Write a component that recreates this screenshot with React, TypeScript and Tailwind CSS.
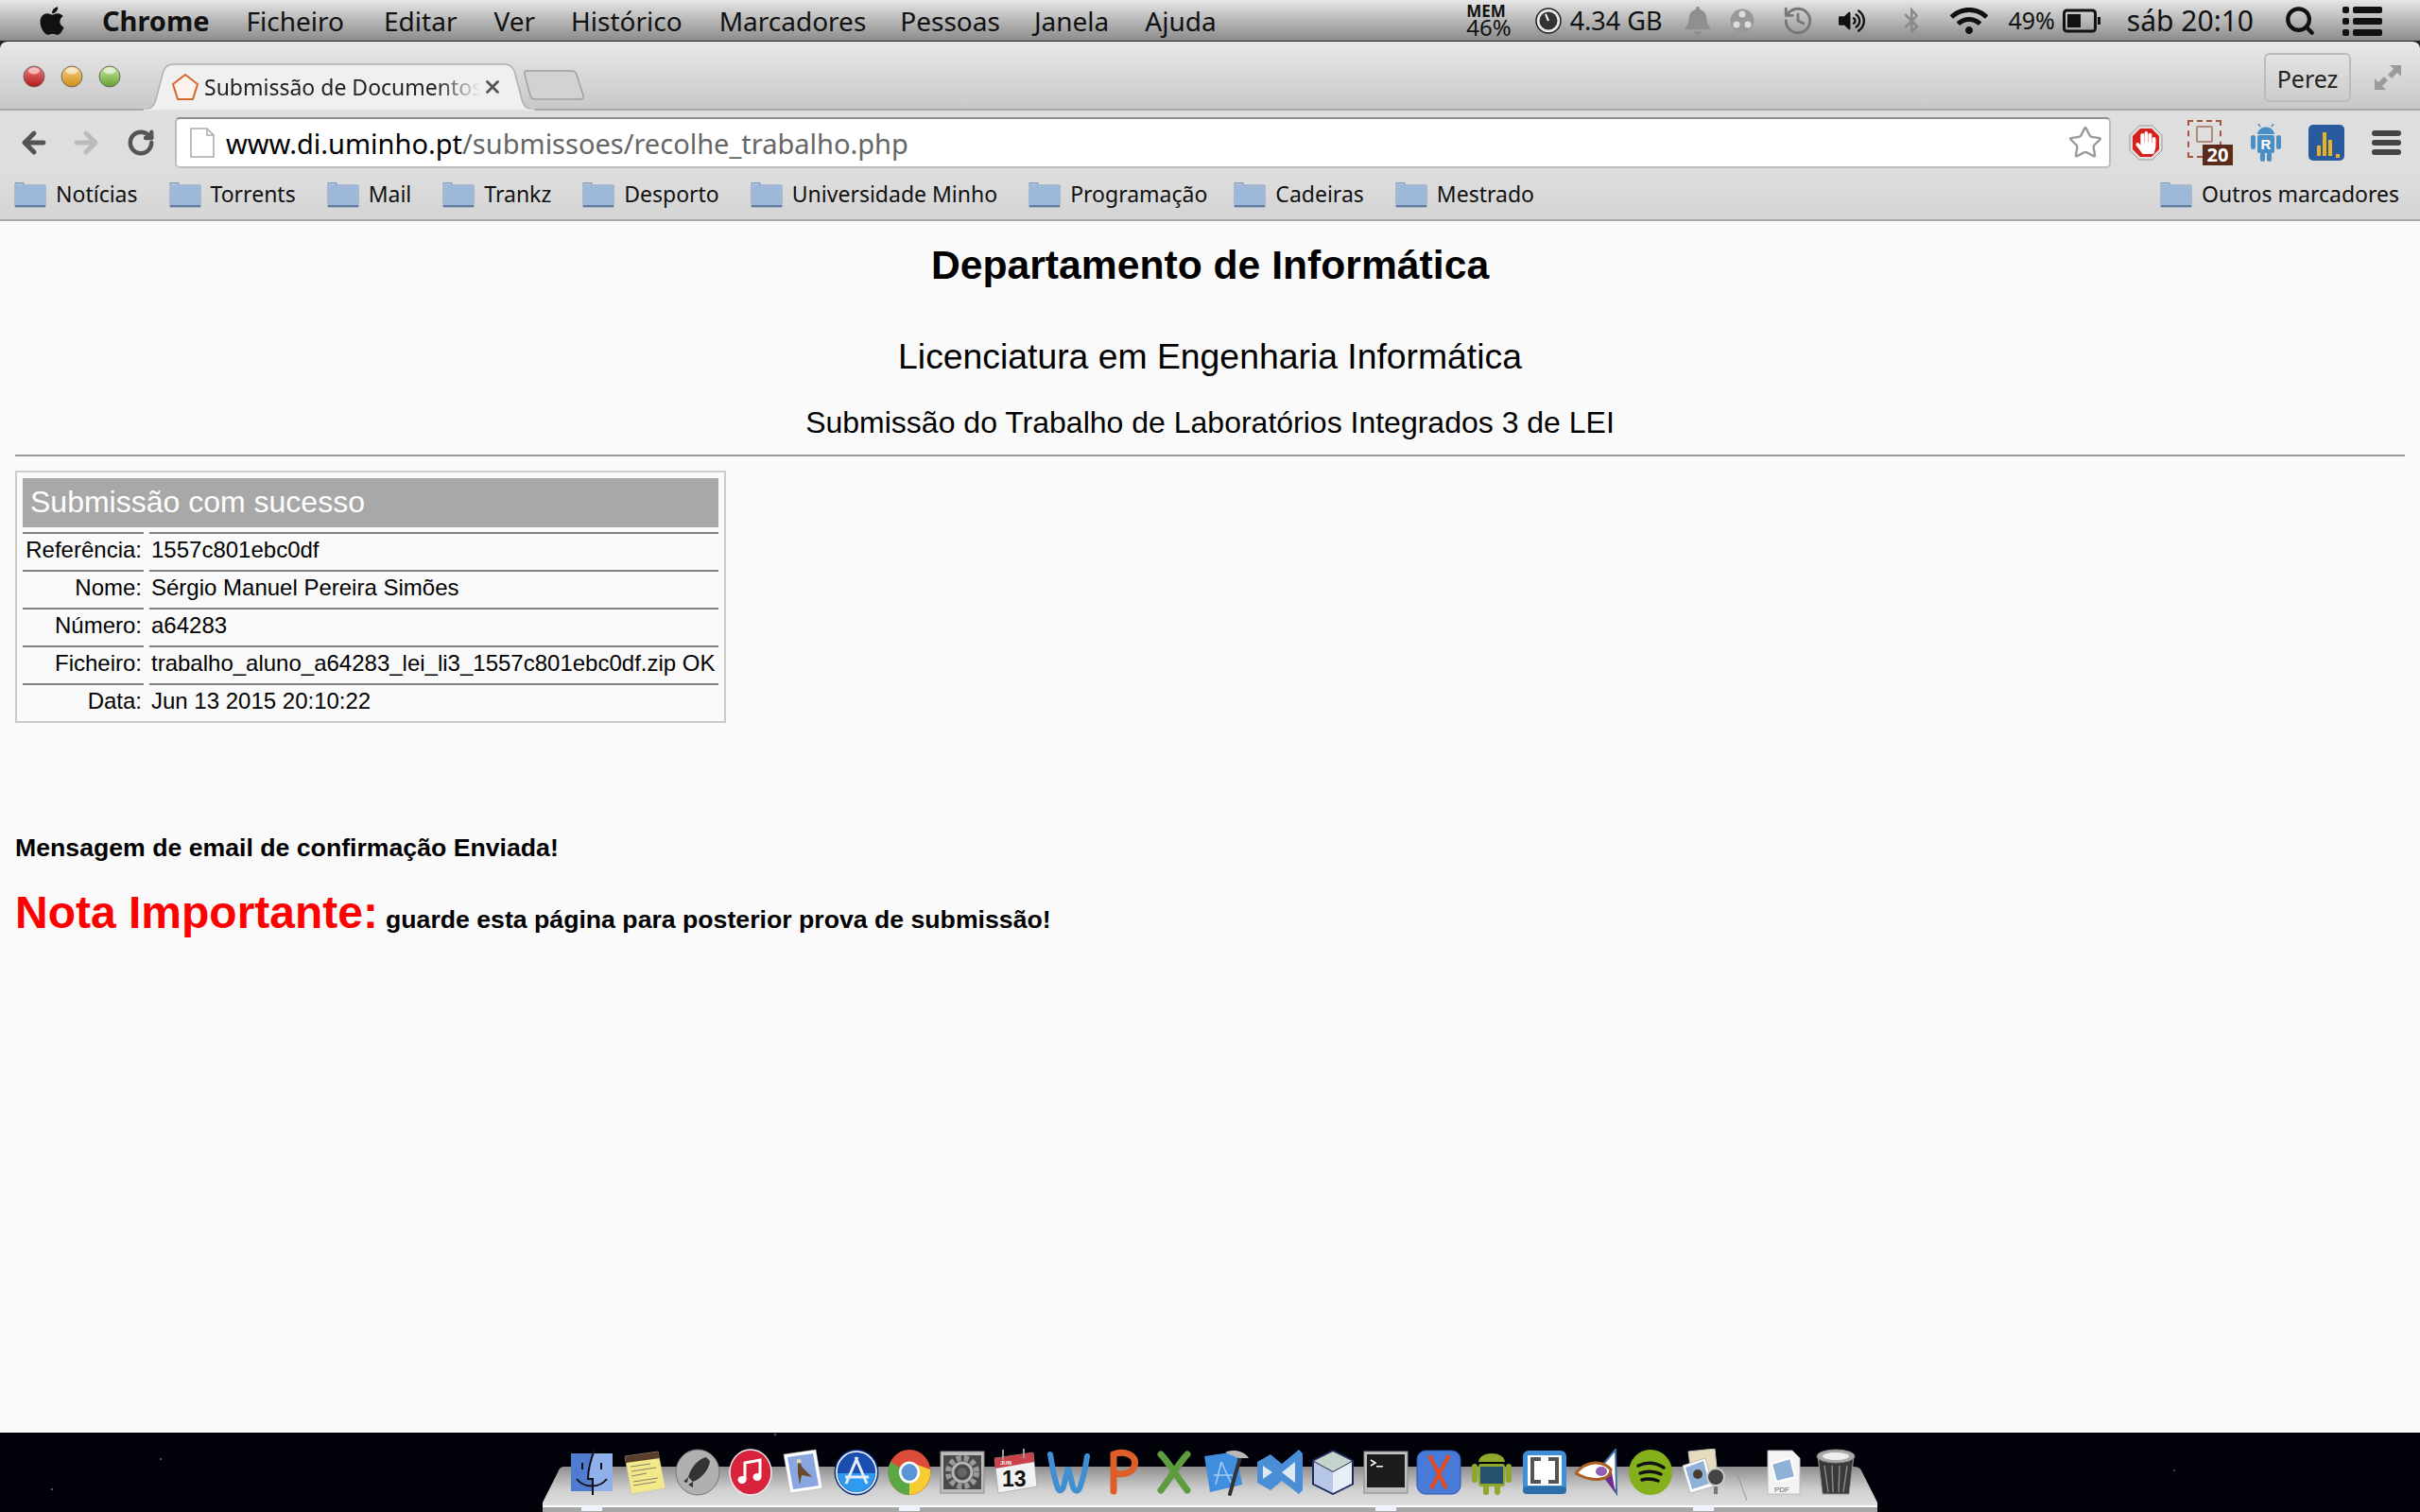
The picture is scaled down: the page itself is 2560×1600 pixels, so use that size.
import React from 'react';
import { ArrowLeft, ArrowRight, RotateCw, Star, X, Search, History } from 'lucide-react';
import { FaApple, FaBell, FaBluetoothB, FaWifi, FaVolumeUp, FaHandPaper } from 'react-icons/fa';

const ui = 'font-["Noto_Sans",sans-serif]';

const menuItems = [
  { label: 'Ficheiro', cls: 'ml-[39px]' },
  { label: 'Editar', cls: 'ml-[42px]' },
  { label: 'Ver', cls: 'ml-[39px]' },
  { label: 'Histórico', cls: 'ml-[38px]' },
  { label: 'Marcadores', cls: 'ml-[39px]' },
  { label: 'Pessoas', cls: 'ml-[36px]' },
  { label: 'Janela', cls: 'ml-[36px]' },
  { label: 'Ajuda', cls: 'ml-[38px]' },
];

const bookmarks = [
  { label: 'Notícias', cls: 'mr-[33px]' },
  { label: 'Torrents', cls: 'mr-[33px]' },
  { label: 'Mail', cls: 'mr-[33px]' },
  { label: 'Trankz', cls: 'mr-[33px]' },
  { label: 'Desporto', cls: 'mr-[33px]' },
  { label: 'Universidade Minho', cls: 'mr-[33px]' },
  { label: 'Programação', cls: 'mr-[28px]' },
  { label: 'Cadeiras', cls: 'mr-[33px]' },
  { label: 'Mestrado', cls: '' },
];

const rows = [
  ['Referência:', '1557c801ebc0df'],
  ['Nome:', 'Sérgio Manuel Pereira Simões'],
  ['Número:', 'a64283'],
  ['Ficheiro:', 'trabalho_aluno_a64283_lei_li3_1557c801ebc0df.zip OK'],
  ['Data:', 'Jun 13 2015 20:10:22'],
];

const Folder = () => (
  <svg width="34" height="28" viewBox="0 0 34 28" className="shrink-0">
    <path d="M1 4 V1.5 H10 V4 H33 V27 H1 Z" fill="#a9c1de" stroke="#7f97b5" strokeWidth="1" />
    <rect x="1" y="4" width="32" height="23" fill="#9db8d8" />
    <rect x="1" y="25" width="32" height="2" fill="#5f7c9f" />
  </svg>
);

const Light = ({ from, to }: { from: string; to: string }) => (
  <svg width="24" height="24" viewBox="0 0 24 24">
    <defs>
      <linearGradient id={from} x1="0" y1="0" x2="0" y2="1">
        <stop offset="0" stopColor={from} />
        <stop offset="1" stopColor={to} />
      </linearGradient>
    </defs>
    <circle cx="12" cy="12" r="11" fill={`url(#${from})`} stroke="#6a6a6a" strokeWidth="1" />
    <ellipse cx="12" cy="6" rx="6" ry="3.5" fill="#fff" opacity="0.55" />
  </svg>
);

// dock icons, all drawn in a 48x50 box
const DockIcon = ({ children }: { children: React.ReactNode }) => (
  <svg width="48" height="50" viewBox="0 0 48 50" className="shrink-0">
    {children}
  </svg>
);

const dockIcons: React.ReactNode[] = [
  <>
    <rect x="2" y="5" width="44" height="40" fill="#8fb0ea" />
    <path d="M2 5 H26 C22 16 20 24 20 33 H24 V45 H2 Z" fill="#4f7bd0" />
    <path d="M27 1 C22 14 20 24 20 32 H25 V49 M8 32 C16 42 32 42 40 32" fill="none" stroke="#111" strokeWidth="2" />
    <rect x="13" y="15" width="2" height="7" fill="#111" />
    <rect x="33" y="15" width="2" height="7" fill="#111" />
  </>,
  <>
    <path d="M3 8 L38 3 L46 42 L10 48 Z" fill="#f3e88a" stroke="#bbb" strokeWidth="0.5" />
    <path d="M3 8 L38 3 L40 10 L4 15 Z" fill="#5b3d2b" />
    <path d="M9 19 L30 16 M10 24 L36 20 M10 29 L26 26 M12 35 L38 31 M12 39 L36 35" stroke="#666" strokeWidth="0.8" />
  </>,
  <>
    <ellipse cx="24" cy="25" rx="23" ry="24" fill="#b0b0b0" stroke="#777" />
    <path d="M33 9 C24 11 17 20 14 30 L19 35 C28 32 36 22 37 13 Z" fill="#333" />
    <path d="M14 30 L9 35 L13 36 Z M19 35 L19 41 L14 38 Z" fill="#333" />
  </>,
  <>
    <ellipse cx="24" cy="25" rx="22" ry="24" fill="#d9233c" stroke="#eee" strokeWidth="1.5" />
    <path d="M18 33 V15 L34 12 V30" fill="none" stroke="#fff" strokeWidth="3" />
    <ellipse cx="15" cy="33" rx="4.5" ry="4" fill="#fff" />
    <ellipse cx="31" cy="30" rx="4.5" ry="4" fill="#fff" />
  </>,
  <>
    <path d="M3 6 L37 1 L44 42 L10 47 Z" fill="#fff" stroke="#aaa" strokeWidth="0.5" />
    <path d="M7 9 L34 5 L40 39 L13 43 Z" fill="#8aa6e0" />
    <path d="M18 10 L23 20 L33 30 L22 28 L20 38 L18 26 Z" fill="#6b4a2a" />
    <circle cx="19" cy="13" r="2.5" fill="#dcd3b8" />
  </>,
  <>
    <ellipse cx="24" cy="25" rx="23" ry="24" fill="#1a4fb0" stroke="#0c2a66" />
    <ellipse cx="24" cy="25" rx="21" ry="22" fill="none" stroke="#fff" strokeWidth="1.5" />
    <path d="M4 26 H44 C42 38 34 46 24 46 C14 46 6 38 4 26 Z" fill="#2e9bf0" />
    <path d="M25 9 L13 37 M23 9 L35 37 M12 30 H37" stroke="#e6eef8" strokeWidth="3" fill="none" />
  </>,
  <>
    <ellipse cx="24" cy="25" rx="22.5" ry="24" fill="#dd4b39" />
    <path d="M24 25 L4 36 A23 24 0 0 0 24 49 Z" fill="#5aa845" />
    <path d="M24 25 L4 36 A23 24 0 0 1 4 14 L14 20 Z" fill="#5aa845" />
    <path d="M24 25 L24 49 A23 24 0 0 0 46 22 L24 14 Z" fill="#f4cd30" />
    <ellipse cx="24" cy="25" rx="11" ry="11.5" fill="#fff" />
    <ellipse cx="24" cy="25" rx="8.5" ry="9" fill="#5a95d8" />
  </>,
  <>
    <rect x="1" y="3" width="46" height="44" fill="#bdbdbd" stroke="#8a8a8a" />
    <rect x="4" y="7" width="40" height="36" fill="#4a4a4a" />
    <circle cx="24" cy="25" r="15" fill="none" stroke="#9a9a9a" strokeWidth="6" strokeDasharray="5 3" />
    <circle cx="24" cy="25" r="10" fill="none" stroke="#b5b5b5" strokeWidth="3" />
    <circle cx="24" cy="25" r="5" fill="#666" />
  </>,
  <>
    <path d="M2 10 L43 4 L47 40 L6 47 Z" fill="#f2f2f2" stroke="#888" strokeWidth="0.5" />
    <path d="M2 10 L43 4 L44 14 L3 21 Z" fill="#c8434a" />
    <rect x="10" y="1" width="2" height="11" fill="#999" />
    <rect x="32" y="0" width="2" height="10" fill="#999" />
    <text x="8" y="17" fontSize="6" fontWeight="700" fill="#fff" fontFamily="Liberation Sans, sans-serif">JUN</text>
    <text x="10" y="40" fontSize="23" fontWeight="700" fill="#111" fontFamily="Liberation Sans, sans-serif">13</text>
  </>,
  <path d="M5 6 C8 24 10 34 13 42 C15 46 18 44 19 40 L24 20 L29 40 C30 45 34 46 36 42 C40 32 42 22 44 8" fill="none" stroke="#3f8fd2" strokeWidth="6" strokeLinecap="round" />,
  <path d="M16 45 V6 C26 2 42 6 38 18 C36 26 26 28 18 26" fill="none" stroke="#dd5e26" strokeWidth="7" strokeLinecap="round" />,
  <path d="M10 6 C18 14 30 34 38 44 M38 6 C30 14 18 34 10 44" fill="none" stroke="#5d9c3f" strokeWidth="7" strokeLinecap="round" />,
  <>
    <path d="M0 8 L34 3 L40 38 L6 46 Z" fill="#3f8ee0" />
    <path d="M18 14 L12 38 M18 14 L28 36 M10 28 H30" stroke="#a8cdf2" strokeWidth="1.5" fill="none" />
    <path d="M38 9 L27 48" stroke="#333" strokeWidth="4" strokeLinecap="round" />
    <path d="M22 4 C30 0 42 2 47 10 L36 10 Z" fill="#b8b8b8" />
  </>,
  <>
    <path d="M44 1 L48 5 V44 L44 48 L26 34 L14 44 L0 36 V14 L14 6 L26 16 Z" fill="#4a8fd6" />
    <path d="M6 18 V32 L16 25 Z M26 25 L40 14 V36 Z" fill="#ddeaf6" />
  </>,
  <>
    <path d="M24 1 L46 12 V38 L24 49 L2 38 V12 Z" fill="#1f2a55" />
    <path d="M24 3 L44 13 L24 24 L4 13 Z" fill="#c4d3cc" />
    <path d="M4 14 L24 25 V47 L4 37 Z" fill="#b7c7e8" />
    <path d="M44 14 L24 25 V47 L44 37 Z" fill="#e8eef8" />
  </>,
  <>
    <rect x="1" y="3" width="46" height="44" fill="#c0c0c0" stroke="#888" />
    <rect x="4" y="6" width="40" height="35" fill="#1c1c1c" />
    <path d="M8 12 L13 15 L8 18" fill="none" stroke="#fff" strokeWidth="1.5" />
    <rect x="14" y="18" width="7" height="1.5" fill="#fff" />
  </>,
  <>
    <rect x="1" y="2" width="46" height="46" rx="9" fill="#4a7ad8" stroke="#2a55a8" />
    <path d="M14 7 L32 42 M35 7 L16 42" stroke="#e64a19" strokeWidth="4" fill="none" />
  </>,
  <>
    <path d="M10 14 C11 2 37 2 38 14 Z" fill="#8fa82c" />
    <rect x="10" y="16" width="28" height="24" rx="3" fill="#8fa82c" />
    <rect x="3" y="16" width="6" height="20" rx="3" fill="#8fa82c" />
    <rect x="39" y="16" width="6" height="20" rx="3" fill="#8fa82c" />
    <rect x="15" y="38" width="6" height="11" rx="3" fill="#8fa82c" />
    <rect x="27" y="38" width="6" height="11" rx="3" fill="#8fa82c" />
    <rect x="12" y="19" width="24" height="18" fill="#27506f" />
  </>,
  <>
    <rect x="1" y="2" width="46" height="46" rx="6" fill="#3f8fd8" />
    <rect x="1" y="40" width="46" height="8" rx="4" fill="#2c6ea8" />
    <rect x="6" y="7" width="36" height="32" fill="#fff" />
    <path d="M20 11 H11 V35 H20 M28 11 H37 V35 H28" fill="none" stroke="#555" strokeWidth="4" />
  </>,
  <>
    <path d="M43 1 L27 20 L44 47 Z" fill="#fff" stroke="#3d6f9e" strokeWidth="2" />
    <path d="M43 47 L30 30 L38 20 Z" fill="#6f2c91" />
    <path d="M1 26 C12 12 30 12 38 22 C38 34 18 36 1 26 Z" fill="#fff" stroke="#a8601c" strokeWidth="3" />
    <ellipse cx="28" cy="24" rx="6" ry="5" fill="#8e5fb5" />
  </>,
  <>
    <ellipse cx="24" cy="25" rx="23" ry="24" fill="#84b01c" />
    <path d="M11 18 C20 14 30 15 38 20 M13 26 C20 23 29 24 35 27 M15 33 C21 31 27 32 32 34" fill="none" stroke="#111" strokeWidth="3.5" strokeLinecap="round" />
  </>,
  <>
    <path d="M8 3 L36 0 L39 30 L12 34 Z" fill="#e8dcc0" stroke="#bbb" />
    <path d="M2 18 L26 10 L34 40 L10 47 Z" fill="#fff" stroke="#bbb" />
    <path d="M5 20 L24 13 L30 37 L12 43 Z" fill="#8fb1d8" />
    <circle cx="18" cy="27" r="5" fill="#4a3b30" />
    <circle cx="37" cy="30" r="9" fill="#444" stroke="#ccc" strokeWidth="2" />
    <path d="M37 40 V48" stroke="#777" strokeWidth="4" />
  </>,
];

const Content = () => (
  <main className='flex-1 bg-[#fafafa] px-[16px] font-["Liberation_Sans",sans-serif] text-black'>
    <h1 className="pt-[21px] text-center text-[42.67px] leading-[50px] font-bold">Departamento de Informática</h1>
    <h2 className="mt-[50px] text-center text-[37.33px] leading-[44px]">Licenciatura em Engenharia Informática</h2>
    <h3 className="mt-[26px] text-center text-[32px] leading-[44px]">Submissão do Trabalho de Laboratórios Integrados 3 de LEI</h3>
    <hr className="mt-[12px] h-[2px] border-0 bg-[#999]" />

    <section className="mt-[15px] w-[752px] border-2 border-[#ccc] p-[6px]">
      <div className="flex h-[52px] items-center bg-[#a8a8a8] pb-[2px] pl-[8px] text-[32px] text-white">Submissão com sucesso</div>
      <div className="mt-[5px]">
        {rows.map(([label, value]) => (
          <div key={label} className="flex h-[40px] gap-[6px] text-[24px] leading-[33px] last:h-[34px]">
            <div className="w-[128px] border-t-2 border-[#808080] pr-[2px] text-right">{label}</div>
            <div className="flex-1 border-t-2 border-[#808080] pl-[2px] whitespace-nowrap">{value}</div>
          </div>
        ))}
      </div>
    </section>

    <p className="mt-[117px] text-[26.67px] leading-[30px] font-bold">Mensagem de email de confirmação Enviada!</p>
    <p className="mt-[26px] flex items-baseline gap-[8px] leading-[56px] font-bold">
      <span className="text-[48px] text-[#ff0000]">Nota Importante:</span>
      <span className="text-[26.67px]">guarde esta página para posterior prova de submissão!</span>
    </p>
  </main>
);

const Dock = () => (
  <footer className="relative h-[84px] overflow-hidden bg-[#01010a]">
    <svg className="absolute inset-0" width="2560" height="84" viewBox="0 0 2560 84">
      <defs>
        <linearGradient id="shelf" x1="0" y1="0" x2="0" y2="1">
          <stop offset="0" stopColor="#8f8f8f" />
          <stop offset="0.5" stopColor="#cfcfcf" />
          <stop offset="1" stopColor="#e4e4e4" />
        </linearGradient>
      </defs>
      <circle cx="820" cy="2" r="1.5" fill="#444" />
      <circle cx="170" cy="28" r="1" fill="#666" />
      <circle cx="55" cy="60" r="1" fill="#777" />
      <circle cx="2300" cy="40" r="1" fill="#555" />
      <path d="M596 36 H1962 Q1968 36 1970 42 L1986 74 V84 H574 V74 L590 42 Q592 36 596 36 Z" fill="url(#shelf)" />
      <rect x="574" y="77" width="1412" height="2" fill="#fdfdfd" />
      <rect x="574" y="79" width="1412" height="5" fill="#a6a6a6" />
      <rect x="615" y="78" width="22" height="5" fill="#eef4ff" />
      <rect x="951" y="78" width="22" height="5" fill="#eef4ff" />
      <rect x="1455" y="78" width="22" height="5" fill="#eef4ff" />
      <rect x="1791" y="78" width="22" height="5" fill="#eef4ff" />
      <path d="M1838 44 L1848 72" stroke="#999" strokeWidth="1" />
    </svg>
    <div className="relative flex gap-[8px] pt-[17px] pl-[602px]">
      {dockIcons.map((icon, i) => (
        <DockIcon key={i}>{icon}</DockIcon>
      ))}
      <div className="ml-[28px]">
        <DockIcon>
          <path d="M8 2 H34 L42 10 V48 H8 Z" fill="#f4f4f4" stroke="#bbb" />
          <path d="M12 16 L32 10 L37 30 L17 35 Z" fill="#8fb1d8" stroke="#fff" strokeWidth="2" />
          <text x="15" y="46" fontSize="8" fill="#666" fontFamily="Liberation Sans, sans-serif">PDF</text>
        </DockIcon>
      </div>
      <DockIcon>
        <path d="M5 8 H43 L38 48 H10 Z" fill="#3a3a3a" stroke="#999" />
        <ellipse cx="24" cy="8" rx="20" ry="7" fill="#aaa" stroke="#888" />
        <ellipse cx="24" cy="8" rx="14" ry="4" fill="#eee" />
        <path d="M12 18 L16 46 M20 18 L21 46 M28 18 L27 46 M36 18 L32 46" stroke="#888" strokeWidth="1.5" />
      </DockIcon>
    </div>
  </footer>
);

export default function App() {
  return (
    <div className={`flex h-[1600px] w-[2560px] flex-col overflow-hidden bg-[#222] ${ui}`}>
      {/* menu bar */}
      <header className="flex h-[43px] shrink-0 items-center bg-linear-to-b from-[#e6e6e6] to-[#8c8c8c] pl-[40px] text-[28px] leading-none text-[#111]">
        <FaApple className="h-[34px] w-[30px]" />
        <span className="ml-[38px] text-[29px] font-bold">Chrome</span>
        {menuItems.map((m) => (
          <span key={m.label} className={m.cls}>{m.label}</span>
        ))}
        <div className="ml-auto flex items-center pr-[40px]">
          <div className="flex flex-col items-start leading-none">
            <span className="text-[17px] leading-[15px] font-bold">MEM</span>
            <span className="text-[24px] leading-[20px]">46%</span>
          </div>
          <svg width="28" height="28" viewBox="0 0 28 28" className="ml-[25px]">
            <circle cx="14" cy="14" r="13" fill="#e8e8e8" stroke="#222" strokeWidth="1.5" />
            <circle cx="14" cy="14" r="9.5" fill="#333" />
            <path d="M14 14 L11 7" stroke="#fff" strokeWidth="2" />
          </svg>
          <span className="ml-[9px] text-[27px]">4.34 GB</span>
          <FaBell className="ml-[24px] h-[30px] w-[28px] text-[#8f8f8f]" />
          <svg width="26" height="28" viewBox="0 0 26 28" className="ml-[20px]">
            <circle cx="13" cy="14" r="12.5" fill="#999" />
            <circle cx="13" cy="7" r="3.5" fill="#ddd" />
            <circle cx="7" cy="18" r="3.5" fill="#ddd" />
            <circle cx="19" cy="18" r="3.5" fill="#ddd" />
          </svg>
          <History className="ml-[29px] h-[34px] w-[34px] text-[#777]" strokeWidth={2} />
          <FaVolumeUp className="ml-[26px] h-[26px] w-[28px]" />
          <FaBluetoothB className="ml-[40px] h-[30px] w-[18px] text-[#888]" />
          <FaWifi className="ml-[30px] h-[32px] w-[44px]" />
          <span className="ml-[19px] text-[25px]">49%</span>
          <svg width="40" height="26" viewBox="0 0 40 26" className="ml-[8px]">
            <rect x="1.5" y="2" width="33" height="22" rx="3" fill="none" stroke="#111" strokeWidth="3" />
            <rect x="5" y="6" width="14" height="14" fill="#111" />
            <rect x="37" y="9" width="3" height="8" fill="#111" />
          </svg>
          <span className="ml-[28px] text-[30px]">sáb 20:10</span>
          <Search className="ml-[32px] mr-[2px] h-[34px] w-[34px]" strokeWidth={3} />
          <svg width="42" height="32" viewBox="0 0 42 32" className="ml-[26px]">
            <rect x="0" y="1" width="7" height="7" rx="2" fill="#111" />
            <rect x="11" y="1" width="31" height="7" rx="2" fill="#111" />
            <rect x="0" y="13" width="7" height="7" rx="2" fill="#111" />
            <rect x="11" y="13" width="31" height="7" rx="2" fill="#111" />
            <rect x="0" y="25" width="7" height="7" rx="2" fill="#111" />
            <rect x="11" y="25" width="31" height="7" rx="2" fill="#111" />
          </svg>
        </div>
      </header>

      {/* browser window */}
      <div className="flex min-h-0 flex-1 flex-col overflow-hidden rounded-t-[8px] border-t border-[#222]">
        <div className="flex h-[73px] shrink-0 items-end border-b-2 border-[#a9a9a9] bg-linear-to-b from-[#e9e9e9] to-[#c8c8c8] pl-[24px]">
          <div className="mb-[22px] flex gap-[16px]">
            <Light from="#f08080" to="#b01818" />
            <Light from="#f6d68a" to="#cf8a10" />
            <Light from="#cdeaa0" to="#5fa030" />
          </div>
          <div className="relative z-10 -mb-[2px] ml-[23px] flex h-[50px] w-[415px] items-center pl-[30px] text-[23px] text-[#222]">
            <svg className="absolute inset-0" width="415" height="50" viewBox="0 0 415 50">
              <path d="M0 49 C8 49 12 46 14 38 L22 8 C24 3 27 1 32 1 H383 C388 1 391 3 393 8 L401 38 C403 46 407 49 415 49 V50 H0 Z" fill="#f0f0f0" stroke="#b0b0b0" strokeWidth="1.5" />
              <rect x="1" y="48.5" width="413" height="1.5" fill="#e8e8e8" />
            </svg>
            <svg width="30" height="30" viewBox="0 0 30 30" className="relative shrink-0">
              <path d="M15 2 L28 12 L23 28 H7 L2 12 Z" fill="#fbf3ec" stroke="#d8662c" strokeWidth="2" />
            </svg>
            <span className="relative ml-[5px] w-[292px] whitespace-nowrap [mask-image:linear-gradient(to_right,black_84%,transparent)]">Submissão de Documentos</span>
            <X className="relative ml-[2px] h-[22px] w-[22px] text-[#555]" strokeWidth={3} />
          </div>
          <svg width="66" height="32" viewBox="0 0 66 32" className="mb-[9px] -ml-[13px] shrink-0">
            <path d="M4 1 H52 Q56 1 57 5 L64 27 Q65 31 61 31 H13 Q9 31 8 27 L2 5 Q1 1 4 1 Z" fill="#d2d2d2" stroke="#a0a0a0" strokeWidth="1.5" />
          </svg>
          <div className="mb-[7px] ml-auto flex items-center pr-[19px]">
            <div className="flex h-[52px] w-[92px] items-center justify-center rounded-[6px] border-2 border-[#bbb] pt-[4px] text-[25px] text-[#222]">Perez</div>
            <svg width="30" height="30" viewBox="0 0 30 30" className="ml-[24px]">
              <path d="M17 2 H29 V14 L25 10 L19 16 L15 12 L21 6 Z M13 28 H1 V16 L5 20 L11 14 L15 18 L9 24 Z" fill="#9a9a9a" />
            </svg>
          </div>
        </div>

        <div className="flex h-[64px] shrink-0 items-center bg-[#dedede] pt-[3px] pl-[19px]">
          <ArrowLeft className="h-[34px] w-[34px] text-[#555]" strokeWidth={3.5} />
          <ArrowRight className="ml-[21px] h-[34px] w-[34px] text-[#bbb]" strokeWidth={3.5} />
          <RotateCw className="ml-[26px] h-[30px] w-[30px] text-[#555]" strokeWidth={3.5} />
          <div className="ml-[21px] flex h-[54px] w-[2048px] items-center rounded-[5px] border-2 border-[#bdbdbd] border-t-[#8f8f8f] bg-white pl-[14px]">
            <svg width="26" height="32" viewBox="0 0 26 32" className="shrink-0">
              <path d="M1 1 H18 L25 8 V31 H1 Z M18 1 V8 H25" fill="#fff" stroke="#aaa" strokeWidth="1.5" />
            </svg>
            <span className="mt-[2px] ml-[12px] text-[29px] text-[#666]"><span className="text-black">www.di.uminho.pt</span>/submissoes/recolhe_trabalho.php</span>
            <Star className="mr-[6px] ml-auto h-[38px] w-[38px] text-[#999]" strokeWidth={1.5} />
          </div>
          <svg width="36" height="38" viewBox="0 0 36 38" className="ml-[19px] shrink-0">
            <path d="M11 1 H25 L35 11 V27 L25 37 H11 L1 27 V11 Z" fill="#e0e0e0" stroke="#999" strokeWidth="1" />
            <path d="M12 4 H24 L32 12 V26 L24 34 H12 L4 26 V12 Z" fill="#d8201c" />
          </svg>
          <FaHandPaper className="-ml-[29px] h-[24px] w-[22px] text-white" />
          <div className="relative ml-[33px] h-[48px] w-[48px] self-center">
            <div className="absolute top-0 left-0 h-[40px] w-[36px] border-2 border-dashed border-[#a5563f]" />
            <div className="absolute top-[6px] left-[9px] h-[18px] w-[18px] rounded-[2px] border-2 border-[#b08a7a]" />
            <div className="absolute right-0 bottom-0 flex h-[22px] w-[32px] items-center justify-center bg-[#5b2b1c] text-[20px] leading-none font-bold text-white">20</div>
          </div>
          <svg width="32" height="40" viewBox="0 0 32 40" className="ml-[19px] shrink-0">
            <path d="M7 11 C8 1 24 1 25 11 Z" fill="#4a8fc4" />
            <path d="M10 3 L8 0 M22 3 L24 0" stroke="#4a8fc4" strokeWidth="1.5" />
            <rect x="7" y="12" width="18" height="19" rx="2" fill="#4a8fc4" />
            <rect x="0" y="12" width="5" height="15" rx="2.5" fill="#4a8fc4" />
            <rect x="27" y="12" width="5" height="15" rx="2.5" fill="#4a8fc4" />
            <rect x="10" y="30" width="5" height="10" rx="2.5" fill="#4a8fc4" />
            <rect x="17" y="30" width="5" height="10" rx="2.5" fill="#4a8fc4" />
            <text x="16" y="27" fontSize="15" fontWeight="700" textAnchor="middle" fill="#fff" fontFamily="Liberation Sans, sans-serif">R</text>
          </svg>
          <svg width="38" height="38" viewBox="0 0 38 38" className="ml-[29px] shrink-0">
            <rect width="38" height="38" rx="5" fill="#2a5a9e" />
            <path d="M11 33 V22 M17 33 V8 M23 33 V16 M29 33 H33" stroke="#e9b222" strokeWidth="4" fill="none" />
          </svg>
          <div className="ml-[29px] flex w-[31px] flex-col gap-[4px]">
            <div className="h-[6px] rounded-[3px] bg-[#444]" />
            <div className="h-[6px] rounded-[3px] bg-[#444]" />
            <div className="h-[6px] rounded-[3px] bg-[#444]" />
          </div>
        </div>

        <nav className="flex h-[53px] shrink-0 items-center border-b-2 border-[#a9a9a9] bg-linear-to-b from-[#dedede] to-[#d4d4d4] pr-[22px] pb-[2px] pl-[15px] text-[23px] text-[#111]">
          {bookmarks.map((b) => (
            <div key={b.label} className={`flex items-center gap-[10px] ${b.cls}`}>
              <Folder />
              <span>{b.label}</span>
            </div>
          ))}
          <div className="ml-auto flex items-center gap-[10px]">
            <Folder />
            <span>Outros marcadores</span>
          </div>
        </nav>

        <Content />
        <Dock />
      </div>
    </div>
  );
}
